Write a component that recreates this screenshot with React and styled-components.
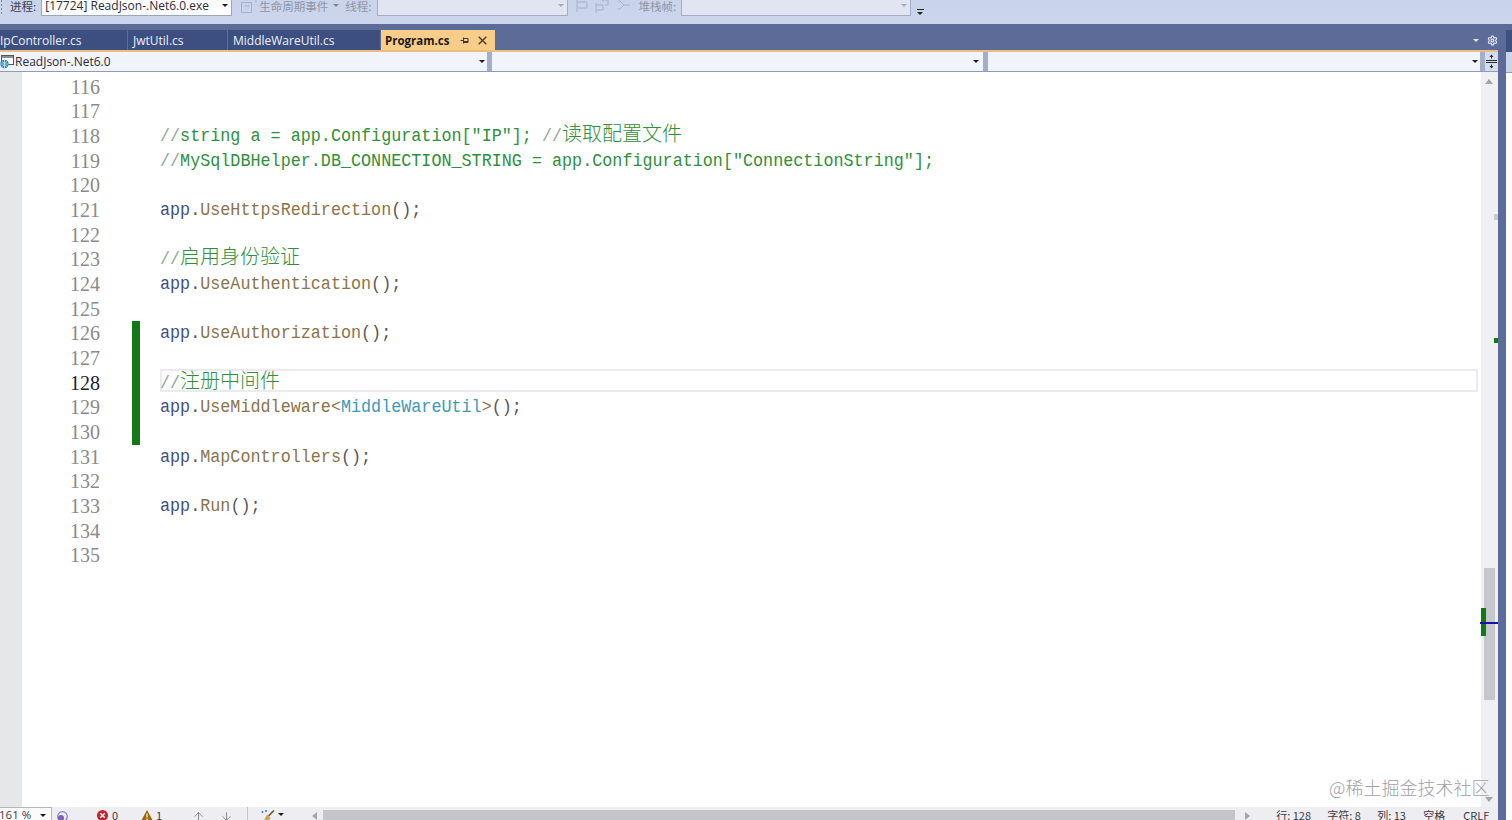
import React from "react";
import styled, { createGlobalStyle } from "styled-components";
import { ArrowUp, ArrowDown, Settings } from "lucide-react";

const Global = createGlobalStyle`
  html, body { margin: 0; padding: 0; background: #fff; overflow: hidden; }
  #root { width: 1512px; height: 820px; }
`;

const UI = `"Noto Sans CJK SC", "Noto Sans", sans-serif`;
const LATIN = `"Open Sans", "Noto Sans CJK SC", sans-serif`;

const Page = styled.div`
  position: relative;
  width: 1512px;
  height: 820px;
  overflow: hidden;
  display: flex;
  flex-direction: column;
  font-family: ${LATIN};
  font-size: 12px;
`;

/* ---------- top toolbar ---------- */
const Toolbar = styled.div`
  height: 24px;
  flex: none;
  background: linear-gradient(#c9d3ea, #ccd5ec);
  overflow: hidden;
`;
const ToolRow = styled.div`
  margin-top: -5px;
  height: 21px;
  display: flex;
  align-items: center;
`;
const Grip = styled.div`
  width: 3px;
  height: 21px;
  margin-right: 7px;
  background: radial-gradient(circle, #7f8aa8 1px, transparent 1px) 0 0 / 3px 4px;
`;
const ToolLabel = styled.span`
  font-family: ${UI};
  font-size: 11.5px;
  color: ${(p) => (p.$off ? "#8f96a8" : "#3a3f50")};
  margin-left: ${(p) => p.$ml || 0}px;
  white-space: nowrap;
`;
const Combo = styled.div`
  box-sizing: border-box;
  width: ${(p) => p.$w}px;
  height: 21px;
  margin-left: ${(p) => p.$ml || 0}px;
  padding-left: 3px;
  display: flex;
  align-items: center;
  justify-content: space-between;
  font-size: 12px;
  color: #2c2c34;
  background: ${(p) => (p.$off ? "#e0e5f1" : "#fdfdfe")};
  border: 1px solid ${(p) => (p.$off ? "#a4adc6" : "#9aa5c2")};
`;
const Caret = styled.i`
  width: 0;
  height: 0;
  flex: none;
  margin-right: ${(p) => p.$mr ?? 3}px;
  margin-left: ${(p) => p.$ml || 0}px;
  border-left: 3px solid transparent;
  border-right: 3px solid transparent;
  border-top: 3px solid ${(p) => p.$c || "#1e1e1e"};
`;
const ToolIcon = styled.svg`
  flex: none;
  margin-left: ${(p) => p.$ml || 0}px;
`;
const Overflow = styled.div`
  margin-left: 6px;
  margin-top: 13px;
  width: 7px;
  flex: none;
  border-top: 1px solid #222;
  padding-top: 2px;
  & > i { display: block; width: 0; height: 0; border-left: 3.5px solid transparent; border-right: 3.5px solid transparent; border-top: 3px solid #222; }
`;

/* ---------- dock ---------- */
const Dock = styled.div`
  flex: 1;
  min-height: 0;
  display: flex;
`;
const Main = styled.div`
  width: 1498px;
  flex: none;
  display: flex;
  flex-direction: column;
`;
const DockEdge = styled.div`
  width: 8px;
  flex: none;
  background: #5c6b98;
`;
const SideStrip = styled.div`
  flex: 1;
  background: #fff;
  display: flex;
  flex-direction: column;
  & > b { height: 6px; background: #5c6b98; }
  & > u { height: 22px; background: #3d5080; }
  & > s { height: 20px; background: #ccd5ea; border-bottom: 1px solid #8e9bbc; }
`;

const TabWell = styled.div`
  height: 28px;
  flex: none;
  box-sizing: border-box;
  padding-top: 6px;
  background: #5c6b98;
  border-bottom: 2px solid #e8bf7e;
  display: flex;
  align-items: stretch;
`;
const Tab = styled.div`
  box-sizing: border-box;
  width: ${(p) => p.$w}px;
  padding-left: ${(p) => p.$pl}px;
  margin-right: 1px;
  display: flex;
  align-items: center;
  white-space: nowrap;
  overflow: hidden;
  color: #eef1fa;
  background: #3d4f80;
  font-size: 12px;
`;
const ActiveTab = styled(Tab)`
  background: #f7cd87;
  color: #1b1b1b;
  font-weight: 700;
  font-size: 11.5px;
`;
const TabTools = styled.div`
  margin-left: auto;
  display: flex;
  align-items: center;
  gap: 9px;
  padding-right: ${(p) => p.$pr || 6}px;
`;
const TabSpacer = styled.div`
  flex: 1;
  display: flex;
  align-items: center;
  justify-content: flex-end;
  gap: 8px;
  padding-right: 0;
`;

const NavBar = styled.div`
  height: 20px;
  flex: none;
  box-sizing: border-box;
  border-bottom: 1px solid #8e9bbc;
  display: grid;
  grid-template-columns: 487px 491.5px 492.5px 1fr;
  column-gap: 4.5px;
  background: #a3aeca;
`;
const NavCombo = styled.div`
  display: flex;
  align-items: center;
  justify-content: space-between;
  background: #f2f4fc;
  color: #2c2c34;
  font-size: 12px;
  overflow: hidden;
`;
const NavLabel = styled.span`
  display: flex;
  align-items: center;
  gap: 1px;
`;
const SplitBtn = styled.div`
  background: #d5dcee;
  display: flex;
  align-items: center;
  justify-content: center;
`;

/* ---------- editor ---------- */
const Editor = styled.div`
  flex: 1;
  min-height: 0;
  display: flex;
  background: #fff;
`;
const Margin = styled.div`
  width: 22px;
  flex: none;
  background: #e6e7e9;
`;
const Code = styled.div`
  flex: 1;
  min-width: 0;
  padding: 2.5px 3px 0 0;
`;
const Row = styled.div`
  height: 24.68px;
  display: grid;
  grid-template-columns: 78px 32px 8px 20px 1fr;
`;
const LineNo = styled.div`
  text-align: right;
  font-family: "Liberation Serif", serif;
  font-size: 20px;
  line-height: 24.68px;
  color: ${(p) => (p.$cur ? "#1c1c2c" : "#8a8a8a")};
  grid-column: 1;
`;
const Change = styled.div`
  grid-column: 3;
  background: ${(p) => (p.$on ? "#117a17" : "transparent")};
`;
const CodeText = styled.div`
  grid-column: 5;
  box-sizing: border-box;
  height: 23px;
  margin-top: ${(p) => (p.$cjk ? -2 : 0)}px;
  line-height: ${(p) => (p.$cjk ? 21 : 23)}px;
  white-space: pre;
  font-family: "Liberation Mono", monospace;
  font-size: 16.75px;
  color: #555;
  box-shadow: ${(p) => (p.$cur ? "inset 0 0 0 2px #eaeaef" : "none")};
`;
const Tok = styled.span`
  display: inline-block;
  transform: scaleY(1.15);
  position: relative;
  top: ${(p) => (p.$up ? -1 : 0)}px;
  color: ${(p) => p.$c};
`;
const Cjk = styled.span`
  font-family: "Noto Sans CJK SC", sans-serif;
  font-size: 20px;
  font-weight: 300;
  color: ${(p) => p.$c};
`;

const VScroll = styled.div`
  position: relative;
  width: 17px;
  flex: none;
  background: #f0f0f3;
`;
const ScrollThumb = styled.div`
  position: absolute;
  left: 3px;
  width: 11px;
  top: 496px;
  height: 132px;
  background: #c6c7cc;
`;
const ScrollMark = styled.div`
  position: absolute;
  left: ${(p) => p.$l}px;
  top: ${(p) => p.$t}px;
  width: ${(p) => p.$w}px;
  height: ${(p) => p.$h}px;
  background: ${(p) => p.$c};
`;
const ArrowTri = styled.i`
  position: absolute;
  left: 4px;
  ${(p) => (p.$down ? "bottom: 5px;" : "top: 7px;")}
  width: 0;
  height: 0;
  border-left: 4.5px solid transparent;
  border-right: 4.5px solid transparent;
  ${(p) => (p.$down ? "border-top" : "border-bottom")}: 5px solid #a4a5aa;
`;

/* ---------- status ---------- */
const Status = styled.div`
  height: 13px;
  flex: none;
  background: #eeeef2;
  overflow: hidden;
  display: flex;
  align-items: flex-start;
  color: #3a3a44;
  font-size: 11.5px;
  line-height: 16px;
`;
const ZoomCombo = styled.div`
  box-sizing: border-box;
  width: 52px;
  height: 20px;
  flex: none;
  padding-right: 2px;
  display: flex;
  justify-content: space-between;
  background: #fbfbfc;
  border-top: 1px solid #b4b6bd;
  border-right: 1px solid #b4b6bd;
  & > span { margin-top: -1px; margin-left: -1px; }
  & > i { margin-top: 6px; }
`;
const StatusItem = styled.div`
  display: flex;
  align-items: flex-start;
  flex: none;
  width: ${(p) => (p.$w ? `${p.$w}px` : "auto")};
  margin-left: ${(p) => p.$ml || 0}px;
  gap: ${(p) => p.$gap || 0}px;
  white-space: nowrap;
  font-family: ${UI};
  font-size: 11px;
  & > svg { margin-top: 3px; flex: none; }
  & > i { margin-top: 6px; }
`;
const Divider = styled.div`
  width: 1px;
  height: 13px;
  flex: none;
  background: #c4c5cb;
  margin-left: ${(p) => p.$ml}px;
`;
const HScroll = styled.div`
  width: 938px;
  flex: none;
  height: 13px;
  margin-left: ${(p) => p.$ml}px;
  display: flex;
  align-items: flex-start;
  justify-content: space-between;
  & > b { flex: 1; height: 13px; background: #c4c5cb; margin: 3px 10px 0 6px; }
`;
const SideTri = styled.i`
  width: 0;
  height: 0;
  margin-top: 5px;
  flex: none;
  border-top: 4px solid transparent;
  border-bottom: 4px solid transparent;
  ${(p) => (p.$right ? "border-left" : "border-right")}: 5px solid #a4a5aa;
`;
const Watermark = styled.div`
  position: absolute;
  left: 1329px;
  top: 775px;
  font-family: ${UI};
  font-size: 18px;
  line-height: 24px;
  font-weight: 300;
  color: #a0a0a6;
  white-space: nowrap;
`;

const A = "#3e4f83";
const M = "#8a744a";
const P = "#555";
const C = "#2f8f3a";
const S = "#8ea79a";
const T = "#3d9ab8";

const call = (name, extra) => [
  [A, "app"],
  [P, "."],
  [M, name],
  ...(extra || []),
  [P, "();"],
];

const lines = {
  118: [[S, "//"], [C, 'string a = app.Configuration["IP"]; '], [S, "//"], ["cjk", "读取配置文件"]],
  119: [[S, "//"], [C, 'MySqlDBHelper.DB_CONNECTION_STRING = app.Configuration["ConnectionString"];']],
  121: call("UseHttpsRedirection"),
  123: [[S, "//"], ["cjk", "启用身份验证"]],
  124: call("UseAuthentication"),
  126: call("UseAuthorization"),
  128: [[S, "//"], ["cjk", "注册中间件"]],
  129: call("UseMiddleware", [[M, "<"], [T, "MiddleWareUtil"], [M, ">"]]),
  131: call("MapControllers"),
  133: call("Run"),
};

const numbers = Array.from({ length: 20 }, (_, i) => 116 + i);

const GlobeIcon = () => (
  <svg width="14" height="15" viewBox="0 0 14 15">
    <rect x="1.5" y="1.5" width="12" height="9" fill="#fff" stroke="#555" />
    <rect x="2" y="2" width="11" height="2" fill="#8a8f9c" />
    <circle cx="4.5" cy="10" r="4.2" fill="#2c7cc4" />
    <path d="M.5 10h8M4.5 6v8M2 7.5c2 1.5 3 1.5 5 0M2 12.5c2-1.5 3-1.5 5 0" stroke="#dff" strokeWidth=".7" fill="none" />
  </svg>
);

const PinIcon = () => (
  <svg width="9" height="9" viewBox="0 0 9 9" fill="none" stroke="#3a3a3a">
    <path d="M.5 4.5h3M3.5 1.5v6M3.5 2.5h4.5v4h-4.5M3.5 5.5h4.5" />
  </svg>
);

const CloseIcon = () => (
  <svg width="9" height="9" viewBox="0 0 9 9" stroke="#4a3a1c" strokeWidth="1.4">
    <path d="M.7.7l7.6 7.6M8.3.7L.7 8.3" />
  </svg>
);

const SplitIcon = () => (
  <svg width="11" height="15" viewBox="0 0 11 15" stroke="#2a2a2a" fill="#2a2a2a">
    <path d="M0 6.5h11M0 8.5h11" fill="none" />
    <path d="M5.5 1.5v3M5.5 10.5v3" fill="none" />
    <path d="M3.5 3l2-2.5 2 2.5zM3.5 12l2 2.5 2-2.5z" stroke="none" />
  </svg>
);

const ErrorIcon = () => (
  <svg width="11" height="11" viewBox="0 0 11 11">
    <circle cx="5.5" cy="5.5" r="5.5" fill="#c8202c" />
    <path d="M3.2 3.2l4.6 4.6M7.8 3.2L3.2 7.8" stroke="#fff" strokeWidth="1.5" />
  </svg>
);

const WarnIcon = () => (
  <svg width="12" height="11" viewBox="0 0 12 11">
    <path d="M6 0l6 11H0z" fill="#9a6a0a" />
    <path d="M6 3.5v4M6 8.5v1.5" stroke="#fff" strokeWidth="1.2" />
  </svg>
);

const BroomIcon = () => (
  <svg width="14" height="13" viewBox="0 0 14 13">
    <path d="M13 .5L7.5 6" stroke="#6b5a2a" strokeWidth="1.6" />
    <path d="M6 4.5l3.5 3.5L6 13H1.5z" fill="#c9a654" />
    <circle cx="1.5" cy="2" r="1" fill="#2b7cc8" />
    <circle cx="5" cy="1" r="1" fill="#2b7cc8" />
  </svg>
);

const LiveIcon = () => (
  <svg width="11" height="13" viewBox="0 0 11 13" fill="none">
    <circle cx="5.5" cy="6.5" r="4.8" stroke="#8b74c4" strokeWidth="1.2" />
    <circle cx="4" cy="8" r="3" fill="#7a62b8" />
  </svg>
);

const Segs = ({ segs, up }) =>
  segs.map(([c, text], i) =>
    c === "cjk" ? (
      <Cjk key={i} $c={C}>{text}</Cjk>
    ) : (
      <Tok key={i} $c={c} $up={up}>{text}</Tok>
    )
  );

export default function App() {
  return (
    <Page>
      <Global />
      <Toolbar>
        <ToolRow>
          <Grip />
          <ToolLabel>进程:</ToolLabel>
          <Combo $w={191} $ml={5}>
            [17724] ReadJson-.Net6.0.exe
            <Caret />
          </Combo>
          <ToolIcon $ml={9} width="16" height="14" viewBox="0 0 16 14" fill="none" stroke="#aab1c4">
            <path d="M.5 3.5h10v10H.5zM3 .5h12v3M3.5 7h5" />
          </ToolIcon>
          <ToolLabel $off $ml={2}>生命周期事件</ToolLabel>
          <Caret $c="#7c8398" $ml={5} $mr={0} />
          <ToolLabel $off $ml={6}>线程:</ToolLabel>
          <Combo $w={191} $ml={6} $off>
            <span />
            <Caret $c="#a4abbd" />
          </Combo>
          <ToolIcon $ml={8} width="55" height="14" viewBox="0 0 55 14" fill="none" stroke="#a9b1c6">
            <path d="M1 1v12M1 3h10v6H1M20 4v10M20 6h7v5h-7M27 3V1h5v5h-3M44 2l4 4-4 4M48 6h6M44 2h-2M44 10h-2" />
          </ToolIcon>
          <ToolLabel $ml={7} $off>堆栈帧:</ToolLabel>
          <Combo $w={230} $ml={5} $off>
            <span />
            <Caret $c="#a4abbd" />
          </Combo>
          <Overflow><i /></Overflow>
        </ToolRow>
      </Toolbar>

      <Dock>
        <Main>
          <TabWell>
            <Tab $w={127} $pl={0}>IpController.cs</Tab>
            <Tab $w={99} $pl={5}>JwtUtil.cs</Tab>
            <Tab $w={152} $pl={5}>MiddleWareUtil.cs</Tab>
            <ActiveTab $w={114} $pl={4}>
              Program.cs
              <TabTools $pr={8}>
                <PinIcon />
                <CloseIcon />
              </TabTools>
            </ActiveTab>
            <TabSpacer>
              <Caret $c="#e2e7f4" $mr={0} />
              <Settings size={11} color="#dfe5f5" strokeWidth={2.6} />
            </TabSpacer>
          </TabWell>
          <NavBar>
            <NavCombo>
              <NavLabel><GlobeIcon />ReadJson-.Net6.0</NavLabel>
              <Caret $mr={2} />
            </NavCombo>
            <NavCombo><span /><Caret $mr={4} /></NavCombo>
            <NavCombo><span /><Caret $mr={2} /></NavCombo>
            <SplitBtn><SplitIcon /></SplitBtn>
          </NavBar>
          <Editor>
            <Margin />
            <Code>
              {numbers.map((n) => {
                const hasCjk = lines[n] && lines[n].some((s) => s[0] === "cjk");
                return (
                  <Row key={n}>
                    <LineNo $cur={n === 128}>{n}</LineNo>
                    <Change $on={n >= 126 && n <= 130} />
                    {lines[n] ? (
                      <CodeText $cur={n === 128} $cjk={hasCjk}>
                        <Segs segs={lines[n]} up={hasCjk} />
                      </CodeText>
                    ) : null}
                  </Row>
                );
              })}
            </Code>
            <VScroll>
              <ArrowTri />
              <ScrollMark $l={13} $t={142} $w={4} $h={6} $c="#c9cacf" />
              <ScrollMark $l={13} $t={266} $w={4} $h={5} $c="#117a17" />
              <ScrollThumb />
              <ScrollMark $l={0} $t={536} $w={5} $h={28} $c="#117a17" />
              <ScrollMark $l={-1} $t={550} $w={18} $h={1.5} $c="#1414a0" />
              <ArrowTri $down />
            </VScroll>
          </Editor>
          <Status>
            <ZoomCombo>
              <span>161 %</span>
              <Caret />
            </ZoomCombo>
            <StatusItem $ml={5}><LiveIcon /></StatusItem>
            <StatusItem $ml={29} $gap={4}><ErrorIcon />0</StatusItem>
            <StatusItem $ml={23} $gap={3}><WarnIcon />1</StatusItem>
            <StatusItem $ml={30}><ArrowUp size={13} strokeWidth={1.2} color="#555" /></StatusItem>
            <StatusItem $ml={15}><ArrowDown size={13} strokeWidth={1.2} color="#555" /></StatusItem>
            <Divider $ml={14} />
            <StatusItem $ml={13} $gap={3}><BroomIcon /><Caret $mr={0} /></StatusItem>
            <HScroll $ml={28}>
              <SideTri />
              <b />
              <SideTri $right />
            </HScroll>
            <StatusItem $ml={26} $w={51}>行: 128</StatusItem>
            <StatusItem $w={50}>字符: 8</StatusItem>
            <StatusItem $w={46}>列: 13</StatusItem>
            <StatusItem $w={40}>空格</StatusItem>
            <StatusItem>CRLF</StatusItem>
          </Status>
        </Main>
        <DockEdge />
        <SideStrip><b /><u /><s /></SideStrip>
      </Dock>
      <Watermark>@稀土掘金技术社区</Watermark>
    </Page>
  );
}
